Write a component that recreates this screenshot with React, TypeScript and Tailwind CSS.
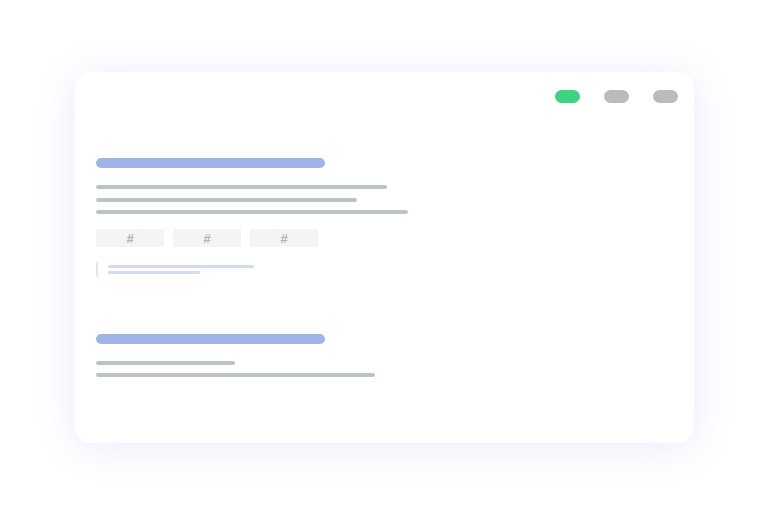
export default function App() {
  return (
    <div className="flex h-[522px] w-[769px] items-start justify-center bg-white pt-[72px] font-['Liberation_Sans',sans-serif]">
      <div className="h-[371px] w-[619px] rounded-2xl bg-white shadow-[0_4px_40px_rgba(80,110,220,0.13)]">
        {/* window buttons */}
        <div className="flex justify-end gap-6 pr-4 pt-[18px]">
          <span className="h-[13px] w-[25px] rounded-full bg-[#3ed283]"></span>
          <span className="h-[13px] w-[25px] rounded-full bg-[#bbbbbb]"></span>
          <span className="h-[13px] w-[25px] rounded-full bg-[#bbbbbb]"></span>
        </div>

        <div className="pl-[21px] pt-[55px]">
          <div className="h-[10px] w-[229px] rounded-full bg-[#a0b5e3]"></div>
          <div className="mt-[17px] flex flex-col gap-[8.5px]">
            <div className="h-[4px] w-[291px] rounded-full bg-[#bcc3c7]"></div>
            <div className="h-[4px] w-[261px] rounded-full bg-[#bcc3c7]"></div>
            <div className="h-[4px] w-[312px] rounded-full bg-[#bcc3c7]"></div>
          </div>

          <div className="mt-[15px] flex gap-[9px]">
            {[0, 1, 2].map((i) => (
              <div
                key={i}
                className="flex h-[18px] w-[68px] items-center justify-center bg-[#f3f4f6] text-[13px] font-bold leading-none text-[#aeb3bb]"
              >
                #
              </div>
            ))}
          </div>

          <div className="mt-[14px] flex h-[17px] flex-col justify-center gap-[3px] rounded-sm border-l-2 border-[#e1e4e9] pl-[10px]">
            <div className="h-[3px] w-[146px] rounded-full bg-[#d2dbf0]"></div>
            <div className="h-[3px] w-[92px] rounded-full bg-[#d2dbf0]"></div>
          </div>

          <div className="mt-[56px] h-[10px] w-[229px] rounded-full bg-[#a0b5e3]"></div>
          <div className="mt-[17px] flex flex-col gap-[8px]">
            <div className="h-[4px] w-[139px] rounded-full bg-[#bcc3c7]"></div>
            <div className="h-[4px] w-[279px] rounded-full bg-[#bcc3c7]"></div>
          </div>
        </div>
      </div>
    </div>
  );
}
